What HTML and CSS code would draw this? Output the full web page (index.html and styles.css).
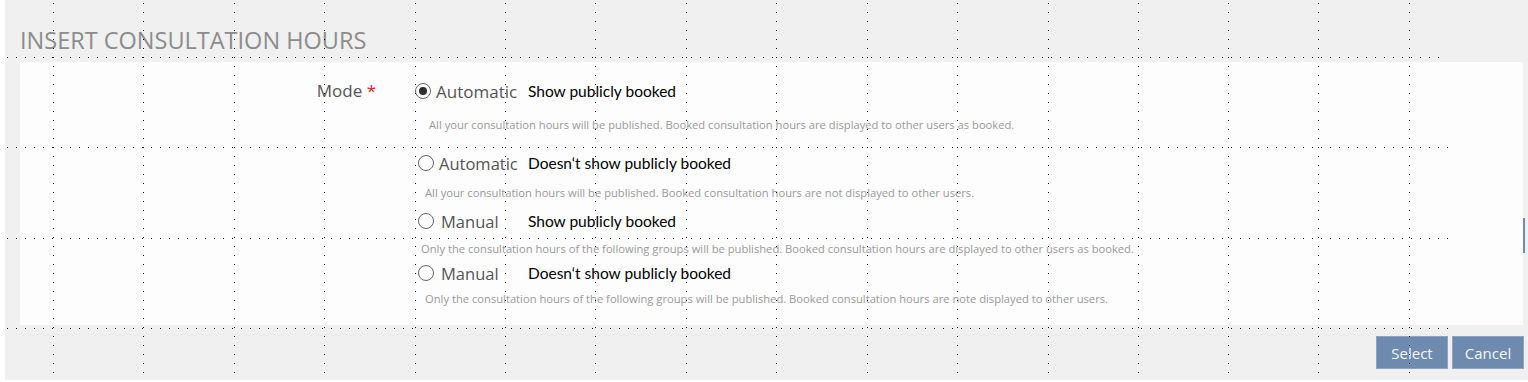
FILE: index.html
```html
<!DOCTYPE html>
<html lang="en">
<head>
  <meta charset="UTF-8">
  <title>Insert consultation hours</title>
  <link rel="stylesheet" href="styles.css">
</head>
<body>

<div class="page">
  <h1 class="title">INSERT CONSULTATION HOURS</h1>

  <div class="panel">
    <div class="field">
      <div class="field-label">Mode <span class="req">*</span></div>
      <div class="options">
        <div class="option">
          <div class="option-head">
            <span class="choice"><span class="radio checked"></span><span class="mode">Automatic</span></span>
            <span class="note">Show publicly booked</span>
          </div>
          <p class="desc">All your consultation hours will be published. Booked consultation hours are displayed to other users as booked.</p>
        </div>
        <div class="option">
          <div class="option-head">
            <span class="choice"><span class="radio"></span><span class="mode">Automatic</span></span>
            <span class="note">Doesn‘t show publicly booked</span>
          </div>
          <p class="desc">All your consultation hours will be published. Booked consultation hours are not displayed to other users.</p>
        </div>
        <div class="option">
          <div class="option-head">
            <span class="choice"><span class="radio"></span><span class="mode">Manual</span></span>
            <span class="note">Show publicly booked</span>
          </div>
          <p class="desc">Only the consultation hours of the following groups will be published. Booked consultation hours are displayed to other users as booked.</p>
        </div>
        <div class="option">
          <div class="option-head">
            <span class="choice"><span class="radio"></span><span class="mode">Manual</span></span>
            <span class="note">Doesn‘t show publicly booked</span>
          </div>
          <p class="desc">Only the consultation hours of the following groups will be published. Booked consultation hours are note displayed to other users.</p>
        </div>
      </div>
    </div>
  </div>

  <div class="actions">
    <button class="btn">Select</button>
    <button class="btn">Cancel</button>
  </div>

  <div class="scroll-thumb"></div>
</div>

<!-- dotted guide grid laid over the mockup -->
<svg class="guides" width="1528" height="382" xmlns="http://www.w3.org/2000/svg">
  <g stroke="#000" stroke-width="1" stroke-dasharray="1 8" shape-rendering="crispEdges">
    <line x1="53.5" y1="3" x2="53.5" y2="375"/>
    <line x1="143.5" y1="3" x2="143.5" y2="375"/>
    <line x1="234.5" y1="3" x2="234.5" y2="375"/>
    <line x1="324.5" y1="3" x2="324.5" y2="375"/>
    <line x1="415.5" y1="3" x2="415.5" y2="375"/>
    <line x1="505.5" y1="3" x2="505.5" y2="375"/>
    <line x1="595.5" y1="3" x2="595.5" y2="375"/>
    <line x1="686.5" y1="3" x2="686.5" y2="375"/>
    <line x1="776.5" y1="3" x2="776.5" y2="375"/>
    <line x1="867.5" y1="3" x2="867.5" y2="375"/>
    <line x1="957.5" y1="3" x2="957.5" y2="375"/>
    <line x1="1048.5" y1="3" x2="1048.5" y2="375"/>
    <line x1="1138.5" y1="3" x2="1138.5" y2="375"/>
    <line x1="1228.5" y1="3" x2="1228.5" y2="375"/>
    <line x1="1318.5" y1="3" x2="1318.5" y2="375"/>
    <line x1="1409.5" y1="3" x2="1409.5" y2="375"/>
    <line x1="7" y1="57.5" x2="1445" y2="57.5"/>
    <line x1="7" y1="147.5" x2="1450" y2="147.5"/>
    <line x1="7" y1="238.5" x2="1450" y2="238.5"/>
    <line x1="7" y1="328.5" x2="1450" y2="328.5"/>
  </g>
</svg>

</body>
</html>
```

FILE: styles.css
```css
* {
  box-sizing: border-box;
}

body {
  margin: 0;
  padding: 0;
  font-family: "Open Sans", "DejaVu Sans", sans-serif;
  background: #ffffff;
  position: relative;
}

.page {
  margin-left: 5px;
  height: 380px;
  background: #f0f0f0;
  position: relative;
  overflow: hidden;
}

.title {
  margin: 0;
  padding: 23px 0 0 15px;
  height: 62px;
  font-size: 23.5px;
  line-height: 34px;
  font-weight: 400;
  color: #8c8c8c;
}

.panel {
  margin: 0 5px 0 15px;
  height: 263px;
  background: #fdfdfd;
  padding-top: 17px;
}

.field {
  display: grid;
  grid-template-columns: 395px 1fr;
}

.field-label {
  text-align: right;
  padding-right: 39px;
  font-size: 17px;
  line-height: 24px;
  color: #555;
}

.req {
  color: #e8262a;
}

.option-head {
  display: flex;
  align-items: center;
  height: 24px;
}

.choice {
  display: flex;
  align-items: center;
  width: 113px;
}

.radio {
  width: 16px;
  height: 16px;
  border: 1px solid #666;
  border-radius: 50%;
  background: #fff;
  position: relative;
  margin-right: 5px;
  flex: none;
}

.radio.checked::after {
  content: "";
  position: absolute;
  left: 3px;
  top: 3px;
  width: 8px;
  height: 8px;
  border-radius: 50%;
  background: #2e2e2e;
}

.mode {
  font-size: 16.5px;
  color: #555;
  white-space: nowrap;
}

.note {
  font-family: Lato, "Open Sans", sans-serif;
  font-size: 15.5px;
  color: #000;
  white-space: nowrap;
}

.desc {
  margin: 0;
  font-size: 11.2px;
  line-height: 16px;
  color: #9a9a9a;
  white-space: nowrap;
}

/* the mockup rows are not evenly spaced */
.option:nth-child(1) .desc {
  margin-top: 14px;
  padding-left: 14px;
}

.option:nth-child(1) .mode {
  font-size: 17px;
}

.option:nth-child(2) {
  margin-top: 18px;
}

.option:nth-child(2) .desc {
  margin-top: 10px;
  padding-left: 10px;
}

.option:nth-child(3) {
  margin-top: 8px;
}

.option:nth-child(3) .desc {
  margin-top: 8px;
  padding-left: 6px;
}

.option:nth-child(4) {
  margin-top: 4px;
}

.option:nth-child(4) .desc {
  margin-top: 6px;
  padding-left: 10px;
}

.option:nth-child(n+2) .choice {
  padding-left: 3px;
}

.option:nth-child(n+3) .radio {
  margin-right: 7px;
}

.actions {
  display: flex;
  justify-content: flex-end;
  gap: 4px;
  padding: 11px 4px 0 0;
}

.btn {
  width: 72px;
  height: 33px;
  background: #6e8aae;
  border: 1px solid #8ea3c0;
  color: #f4f6f9;
  font-family: "Open Sans", sans-serif;
  font-size: 15px;
  padding: 0;
  cursor: pointer;
}

.scroll-thumb {
  position: absolute;
  left: 1518px;
  top: 218px;
  width: 2px;
  height: 35px;
  background: #6e8aae;
}

.guides {
  position: absolute;
  left: 0;
  top: 0;
  pointer-events: none;
}
```
